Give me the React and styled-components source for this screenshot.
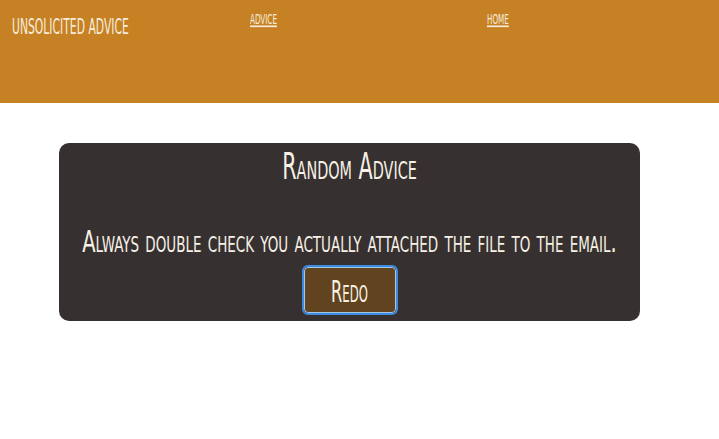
import React from 'react';
import styled, { createGlobalStyle } from 'styled-components';

const GlobalStyle = createGlobalStyle`
  body {
    margin: 0;
    background: #ffffff;
    font-family: "DejaVu Sans Condensed", "DejaVu Sans", sans-serif;
    font-variant: small-caps;
  }
`

const Header = styled.header`
  height: 103px;
  background-color: #c68125;
  display: grid;
  grid-template-columns: 238px 237px 1fr;
  padding-left: 12px;
  box-sizing: border-box;
  align-items: start;
`
const Brand = styled.div`
  color: #f6ecdc;
  font-size: 12px;
  margin-top: 20px;
  white-space: nowrap;
`
const NavLink = styled.a`
  color: #f6ecdc;
  font-size: 8px;
  margin-top: 15px;
  justify-self: start;
  white-space: nowrap;
`
// Stretch squeezes the wide fallback font into the tall, narrow look of the original
const Stretch = styled.span`
  display: inline-block;
  transform: scaleY(${p => p.$y || 1.5});
  transform-origin: ${p => p.$origin || 'center'};
  text-decoration: ${p => (p.$underline ? 'underline' : 'none')};
  text-underline-offset: 1px;
`
const Card = styled.section`
  width: 581px;
  height: 178px;
  margin: 40px 0 0 59px;
  background-color: #363030;
  border-radius: 10px;
  display: flex;
  flex-direction: column;
  align-items: center;
  color: #f7f1e6;
  box-sizing: border-box;
  padding-top: 7px;
`
const Title = styled.h2`
  margin: 0;
  font-weight: normal;
  font-size: 23px;
  line-height: 32px;
`
const Advice = styled.p`
  margin: 47px 0 0;
  font-size: 21.7px;
  line-height: 26px;
  white-space: nowrap;
`
const Button = styled.button`
  margin-top: 12px;
  width: 92px;
  height: 46px;
  background-color: #62431f;
  color: #f7f1e6;
  font-family: inherit;
  font-variant: small-caps;
  font-size: 18px;
  border: 1px solid #a9c6e8;
  border-radius: 4px;
  outline: 2px solid #3b8be0;
  outline-offset: 0;
  box-sizing: border-box;
  padding: 0;
`

export default function App() {
  return (
    <>
      <GlobalStyle />
      <Header>
        <Brand><Stretch $y={1.8} $origin="left center">UNSOLICITED ADVICE</Stretch></Brand>
        <NavLink href="#"><Stretch $y={1.7} $origin="left center" $underline>ADVICE</Stretch></NavLink>
        <NavLink href="#"><Stretch $y={1.7} $origin="left center" $underline>HOME</Stretch></NavLink>
      </Header>
      <Card>
        <Title><Stretch $y={1.6}>Random Advice</Stretch></Title>
        <Advice><Stretch $y={1.4}>Always double check you actually attached the file to the email.</Stretch></Advice>
        <Button><Stretch $y={1.7}>Redo</Stretch></Button>
      </Card>
    </>
  )
}
